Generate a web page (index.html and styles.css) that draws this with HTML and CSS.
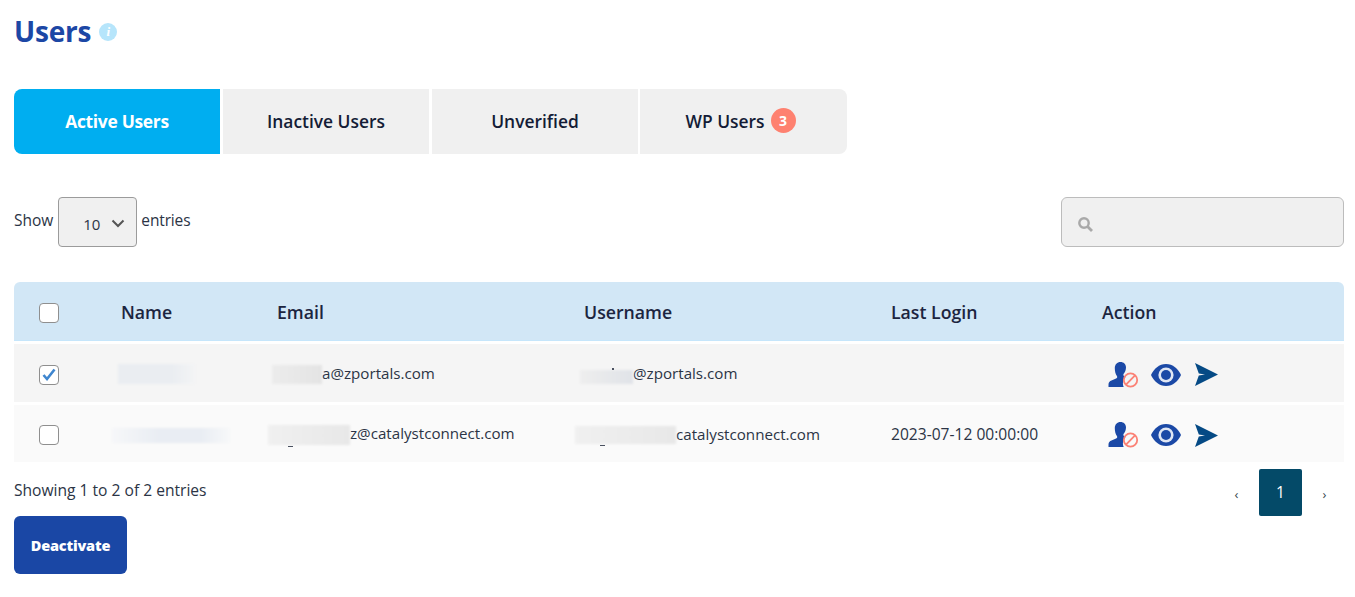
FILE: index.html
```html
<!DOCTYPE html>
<html lang="en">
<head>
<meta charset="utf-8">
<title>Users</title>
<link rel="stylesheet" href="styles.css">
</head>
<body>
<svg class="sprites" width="0" height="0" aria-hidden="true">
  <symbol id="i-user" viewBox="0 0 31 26">
    <path fill="#1b49a6" d="M12.500 0c3.200 0 5.500 2.200 5.500 5.300 0 2.700-1 5-2.300 6.500-.6.800-.5 1.800.3 2.300l1.500.9c-1.700 1.700-2.600 4-2.600 6.400 0 1.300.3 2.500.8 3.600H0.500v-2.600c0-2.200 1.200-3.300 3-4l4.600-1.900c1.200-.5 1.400-1.500.8-2.500C7.600 12.200 6.800 9.500 6.800 6.200 6.800 2.500 9.200 0 12.500 0z"/>
    <circle cx="22.500" cy="18" r="6.700" fill="none" stroke="#fb8276" stroke-width="1.800"/>
    <path d="M18 22.700l9-9.400" stroke="#fb8276" stroke-width="1.800"/>
  </symbol>
  <symbol id="i-eye" viewBox="0 0 30 22">
    <path fill="#1b49a6" d="M15 0c6.800 0 12.200 4.800 15 11-2.800 6.200-8.200 11-15 11S2.800 17.200 0 11C2.800 4.800 8.200 0 15 0z"/>
    <circle cx="15" cy="11" r="7.600" fill="#dfe6f4"/>
    <circle cx="15" cy="11" r="5" fill="#1b49a6"/>
  </symbol>
  <symbol id="i-send" viewBox="0 0 23 23">
    <path fill="#054a85" d="M0 0l23 11.500L0 23l3.800-10.500 6.200-1-6.200-1z"/>
  </symbol>
</svg>

<main class="page">
  <header class="title-row">
    <h1 class="title">Users</h1>
    <span class="info">i</span>
  </header>

  <nav class="tabs">
    <a class="tab tab-active">Active Users</a>
    <a class="tab">Inactive Users</a>
    <a class="tab">Unverified</a>
    <a class="tab">WP Users <span class="badge">3</span></a>
  </nav>

  <section class="controls">
    <div class="length">
      <span>Show</span>
      <div class="select">
        <span>10</span>
        <svg class="chev" width="14" height="9" viewBox="0 0 14 9"><path d="M1.500 1.500L7 7l5.500-5.500" fill="none" stroke="#555" stroke-width="2"/></svg>
      </div>
      <span class="entries">entries</span>
    </div>
    <div class="search">
      <svg width="17" height="17" viewBox="0 0 17 17"><circle cx="7" cy="7" r="4.700" fill="none" stroke="#a9a9a9" stroke-width="2.400"/><path d="M10.500 10.500l4.500 4.500" stroke="#a9a9a9" stroke-width="2.800"/></svg>
    </div>
  </section>

  <table class="users">
    <colgroup>
      <col class="c-check"><col class="c-name"><col class="c-mail"><col class="c-mail"><col class="c-login"><col>
    </colgroup>
    <thead>
      <tr>
        <th class="check-cell"><span class="box"></span></th>
        <th>Name</th><th>Email</th><th>Username</th><th>Last Login</th><th>Action</th>
      </tr>
    </thead>
    <tbody>
      <tr class="row-a">
        <td class="check-cell"><span class="box box-on"><svg width="14" height="13" viewBox="0 0 14 13"><path d="M1.500 7l3.500 4L12.500 1.500" fill="none" stroke="#3f86cf" stroke-width="2.600"/></svg></span></td>
        <td><span class="smudge name-a"></span></td>
        <td><span class="smudge mail-a"></span>a@zportals.com</td>
        <td><span class="smudge user-a"></span>@zportals.com</td>
        <td></td>
        <td class="actions">
          <svg class="a-user"><use href="#i-user"/></svg><svg class="a-eye"><use href="#i-eye"/></svg><svg class="a-send"><use href="#i-send"/></svg>
        </td>
      </tr>
      <tr class="row-b">
        <td class="check-cell"><span class="box"></span></td>
        <td><span class="smudge name-b"></span></td>
        <td><span class="smudge mail-b"></span>z@catalystconnect.com</td>
        <td><span class="smudge user-b"></span>catalystconnect.com</td>
        <td class="date">2023-07-12 00:00:00</td>
        <td class="actions">
          <svg class="a-user"><use href="#i-user"/></svg><svg class="a-eye"><use href="#i-eye"/></svg><svg class="a-send"><use href="#i-send"/></svg>
        </td>
      </tr>
    </tbody>
  </table>

  <footer class="table-foot">
    <div class="foot-left">
      <p class="count">Showing 1 to 2 of 2 entries</p>
      <button class="deactivate">Deactivate</button>
    </div>
    <div class="pager">
      <span class="pg-arrow">‹</span>
      <span class="pg-num">1</span>
      <span class="pg-arrow">›</span>
    </div>
  </footer>
</main>
</body>
</html>
```

FILE: styles.css
```css
* { box-sizing: border-box; }
html, body { margin: 0; padding: 0; background: #fff; }
body {
  font-family: "Open Sans", "Noto Sans", "Liberation Sans", sans-serif;
  font-size: 15.500px;
  color: #2b3445;
}
.sprites { position: absolute; }
.page { width: 1344px; padding-left: 14px; }

.title-row { display: flex; align-items: center; gap: 8px; height: 62px; }
.title { margin: 0; font-size: 28px; font-weight: 700; color: #1c47a5; line-height: 62px; letter-spacing: -.2px; }
.info {
  width: 18px; height: 18px; border-radius: 50%;
  background: #b6e5fb; color: #fff;
  font: italic 700 13px/18px "Liberation Serif", serif;
  text-align: center; margin-top: 2px;
}

.tabs { display: flex; gap: 3px; margin-top: 27px; }
.tab {
  flex: 0 0 206px; height: 65px;
  display: flex; align-items: center; justify-content: center; gap: 6px;
  padding-bottom: 2px;
  background: #f0f0f0; color: #141c36;
  font-size: 17.400px; font-weight: 600;
}
.tab-active { background: #00aef0; color: #fff; border-radius: 8px 0 0 8px; font-weight: 700; letter-spacing: -.3px; }
.tab:last-child { flex-basis: 207px; border-radius: 0 8px 8px 0; margin-left: -1px; padding-right: 6px; }
.badge {
  width: 25px; height: 25px; border-radius: 50%;
  background: #fe8170; color: #fff;
  font-size: 14px; font-weight: 700; line-height: 25px; text-align: center;
}

.controls { display: flex; justify-content: space-between; margin-top: 43px; height: 50px; }
.length { display: flex; align-items: flex-start; gap: 5px; line-height: 47px; }
.entries { margin-left: -1px; letter-spacing: -.15px; }
.select {
  width: 79px; height: 50px;
  display: flex; align-items: center; justify-content: flex-end; gap: 11px;
  padding: 5px 11px 0 0;
  background: #f0f0f0; border: 1px solid #9b9b9b; border-radius: 4px;
  color: #2b3445; font-size: 15px; line-height: 1;
}
.chev { margin-top: -3px; }
.search {
  width: 283px; height: 50px;
  display: flex; align-items: center; padding: 4px 0 0 15px;
  background: #f0f0f0; border: 1px solid #bcbcbc; border-radius: 6px;
}

.users { width: 1330px; margin-top: 35px; border-collapse: separate; border-spacing: 0; table-layout: fixed; }
.c-check { width: 107px; }
.c-name { width: 156px; }
.c-mail { width: 307px; }
.c-login { width: 211px; }
.users th {
  height: 59px; padding: 2px 0 0; text-align: left;
  background: #d2e7f6; border-bottom: 1px solid #c6e6fb;
  color: #1c2540; font-size: 17.700px; font-weight: 600;
}
.users th:first-child { border-radius: 6px 0 0 0; }
.users th:last-child { border-radius: 0 6px 0 0; }
.users td { padding: 1px 0 0; white-space: nowrap; font-size: 15.150px; }
.users .date { font-size: 15.600px; }
.row-a td { background: #f5f5f5; border-top: 3px solid #fff; height: 61px; }
.row-b td { background: #fafafa; border-top: 3px solid #fff; height: 60px; }
.users .check-cell { padding: 3px 0 0 25px; }
.users .actions { padding-top: 3px; }
.box {
  display: flex; align-items: center; justify-content: center;
  width: 20px; height: 20px;
  background: #fff; border: 1px solid #8f8f8f; border-radius: 4px;
}

.smudge { display: inline-block; position: relative; vertical-align: middle; }
.smudge::before { content: ""; position: absolute; inset: 0; background: var(--fill); filter: blur(1px); }
.name-a { --fill: linear-gradient(90deg, #eaedf1 70%, #f3f4f5); width: 77px; height: 20px; margin-left: -3px; }
.mail-a { --fill: linear-gradient(90deg, #ececec, #e4e4e4); width: 50px; height: 19px; margin-left: -5px; }
.user-a { --fill: linear-gradient(90deg, #eeeeee, #e0e3e8); width: 53px; height: 14px; margin-left: -4px; margin-top: 3px; }
.name-b { --fill: linear-gradient(90deg, #f6f7f9, #e9edf3 40%, #e9edf3 75%, #f7f8f9); width: 118px; height: 15px; margin-left: -9px; }
.mail-b { --fill: linear-gradient(90deg, #f0f0f0, #e8e8e8); width: 82px; height: 20px; margin-left: -9px; }
.user-b { --fill: linear-gradient(90deg, #f0f0f0, #e8e8e8); width: 101px; height: 18px; margin-left: -9px; }
.user-a::after, .mail-b::after, .user-b::after { content: ""; position: absolute; background: #4a5160; }
.user-a::after { width: 2px; height: 2px; left: 32px; top: -2px; }
.mail-b::after { width: 5px; height: 1px; left: 20px; bottom: -2px; }
.user-b::after { width: 5px; height: 1px; left: 25px; bottom: -2px; }

.actions svg { display: inline-block; vertical-align: middle; }
.a-user { width: 31px; height: 26px; margin-left: 6px; }
.a-eye { width: 30px; height: 22px; margin-left: 12px; }
.a-send { width: 23px; height: 23px; margin-left: 14px; }

.table-foot { display: flex; justify-content: space-between; width: 1330px; }
.count { margin: 18px 0 0; line-height: 20px; font-size: 15.600px; }
.deactivate {
  display: block; margin-top: 16px; width: 113px; height: 58px; padding: 0;
  background: #1a47a5; color: #fff; border: 0; border-radius: 6px;
  font-family: inherit; font-size: 14.500px; font-weight: 800; letter-spacing: -.2px;
}
.pager { display: flex; align-items: flex-start; gap: 15px; margin-top: 7px; padding-right: 12px; }
.pg-arrow { width: 15px; height: 47px; line-height: 50px; text-align: center; font-size: 13px; color: #37474f; }
.pg-num {
  width: 43px; height: 47px; line-height: 47px; text-align: center;
  background: #044a68; color: #fff; border-radius: 2px; font-size: 15.500px;
}
```
